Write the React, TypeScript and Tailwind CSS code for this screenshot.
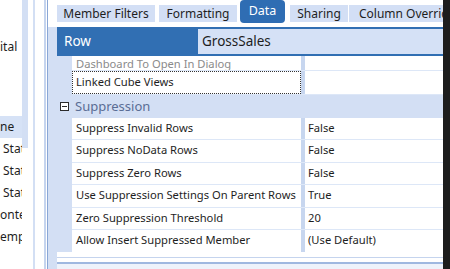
import React from 'react';

interface PropRow {
  name: string;
  value: string;
}

const rows: PropRow[] = [
  { name: 'Suppress Invalid Rows', value: 'False' },
  { name: 'Suppress NoData Rows', value: 'False' },
  { name: 'Suppress Zero Rows', value: 'False' },
  { name: 'Use Suppression Settings On Parent Rows', value: 'True' },
  { name: 'Zero Suppression Threshold', value: '20' },
  { name: 'Allow Insert Suppressed Member', value: '(Use Default)' },
];

const GridRow: React.FC<{ name: string; value: string }> = ({ name, value }) => (
  <div className="flex h-[22.5px] shrink-0 border-b border-[#dde7f7]">
    <div className="w-[229px] shrink-0 pl-[4px] flex items-center whitespace-nowrap overflow-hidden">{name}</div>
    <div className="w-[4px] shrink-0 bg-[#c7d6ef]" />
    <div className="flex-1 pl-[3px] flex items-center whitespace-nowrap">{value}</div>
  </div>
);

const App: React.FC = () => {
  return (
    <div className="w-[450px] h-[269px] flex overflow-hidden bg-white font-['Noto_Sans',sans-serif] text-[11.2px] text-[#1e1e1e]">
      {/* left tree, scrolled sideways */}
      <div className="w-[22px] shrink-0 overflow-hidden text-[12px] text-[#1e1e1e]">
        <div className="h-[36px]" />
        <div className="h-[22px] flex items-center whitespace-nowrap">ital</div>
        <div className="h-[58px]" />
        <div className="h-[22px] flex items-center bg-[#d6e2f6] whitespace-nowrap">ne</div>
        <div className="h-[22px] flex items-center pl-[3px] whitespace-nowrap">Stat</div>
        <div className="h-[22px] flex items-center pl-[3px] whitespace-nowrap">Stat</div>
        <div className="h-[22px] flex items-center pl-[3px] whitespace-nowrap">Stat</div>
        <div className="h-[22px] flex items-center whitespace-nowrap">onte</div>
        <div className="h-[22px] flex items-center whitespace-nowrap">empl</div>
      </div>
      {/* scrollbar */}
      <div className="w-[6px] shrink-0">
        <div className="h-[148px] bg-[#d3dff4]" />
      </div>
      <div className="w-[5px] shrink-0" />
      <div className="w-[2px] shrink-0 bg-[#d3dff4]" />
      <div className="w-[9px] shrink-0" />
      <div className="w-[2px] shrink-0 bg-[#c5d4ee]" />
      <div className="w-[1px] shrink-0" />
      {/* main panel */}
      <div className="w-[396px] shrink-0 flex flex-col border-l border-[#8aa7d6] bg-white">
        {/* tabs */}
        <div className="h-[27px] flex items-start pl-[9px] bg-white text-[12px]">
          <div className="w-[98px] h-[17px] mt-[5px] shrink-0 flex items-center justify-center bg-[#d3dff5] whitespace-nowrap">Member Filters</div>
          <div className="w-[78px] h-[17px] mt-[5px] ml-[4px] shrink-0 flex items-center justify-center bg-[#d3dff5] whitespace-nowrap">Formatting</div>
          <div className="w-[45px] h-[23px] ml-[3px] shrink-0 flex items-center justify-center rounded-[4px] bg-[#2f6db3] text-white text-[12.5px] whitespace-nowrap">Data</div>
          <div className="w-[58px] h-[17px] mt-[5px] ml-[5px] shrink-0 flex items-center justify-center bg-[#d3dff5] whitespace-nowrap">Sharing</div>
          <div className="flex-1 h-[17px] mt-[5px] ml-[1px] pl-[10px] flex items-center bg-[#d3dff5] whitespace-nowrap overflow-hidden">Column Overrides</div>
        </div>
        {/* header */}
        <div className="flex h-[29px] bg-[#d3dff4] pl-[9px]">
          <div className="w-[141px] shrink-0 bg-[#316fb3] text-white text-[13.5px] flex items-center pl-[7px]">Row</div>
          <div className="flex-1 border-y-2 border-[#316fb3] bg-[#d5e1f6] flex items-center pl-[4px] text-[13.5px] text-[#1e1e1e]">
            GrossSales
          </div>
        </div>
        {/* grid */}
        <div className="flex flex-1 bg-[#d3dff4] pl-[9px]">
          <div className="flex-1 flex flex-col">
            <div className="flex h-[196px] shrink-0">
              <div className="w-[15px] shrink-0 flex flex-col">
                <div className="h-[39px]" />
                <div className="h-[22px] flex items-center justify-center">
                  <div className="w-[9px] h-[9px] border border-[#2b2b2b] bg-white flex items-center justify-center">
                    <div className="w-[5px] h-[1px] bg-[#2b2b2b]" />
                  </div>
                </div>
              </div>
              <div className="flex-1 flex flex-col bg-white overflow-hidden">
                <div className="flex h-[15px] shrink-0 border-b border-[#dde7f7] text-[#8a8a8a]">
                  <div className="w-[229px] shrink-0 pl-[4px] flex items-end whitespace-nowrap leading-[13px] overflow-hidden">Dashboard To Open In Dialog</div>
                  <div className="w-[4px] shrink-0 bg-[#c7d6ef]" />
                  <div className="flex-1" />
                </div>
                <div className="flex h-[24px] shrink-0 border-b border-[#dde7f7]">
                  <div className="w-[229px] shrink-0 pl-[3px] flex items-center whitespace-nowrap border border-dotted border-[#333]">
                    Linked Cube Views
                  </div>
                  <div className="w-[4px] shrink-0 bg-[#c7d6ef]" />
                  <div className="flex-1" />
                </div>
                <div className="h-[22.5px] shrink-0 -ml-[15px] pl-[18px] bg-[#d3dff4] flex items-center text-[13px] text-[#5a6d94]">Suppression</div>
                {rows.map((r) => (
                  <GridRow key={r.name} name={r.name} value={r.value} />
                ))}
              </div>
            </div>
            <div className="h-[5px] bg-white" />
            <div className="h-[1px] bg-[#c5d4ee]" />
            <div className="h-[4px] bg-white" />
            <div className="h-[2px] bg-[#9fb8e0]" />
            <div className="flex-1 bg-[#eef3fb]" />
          </div>
        </div>
      </div>
      <div className="flex-1 bg-[#1d1d1d]" />
    </div>
  );
};

export default App;
